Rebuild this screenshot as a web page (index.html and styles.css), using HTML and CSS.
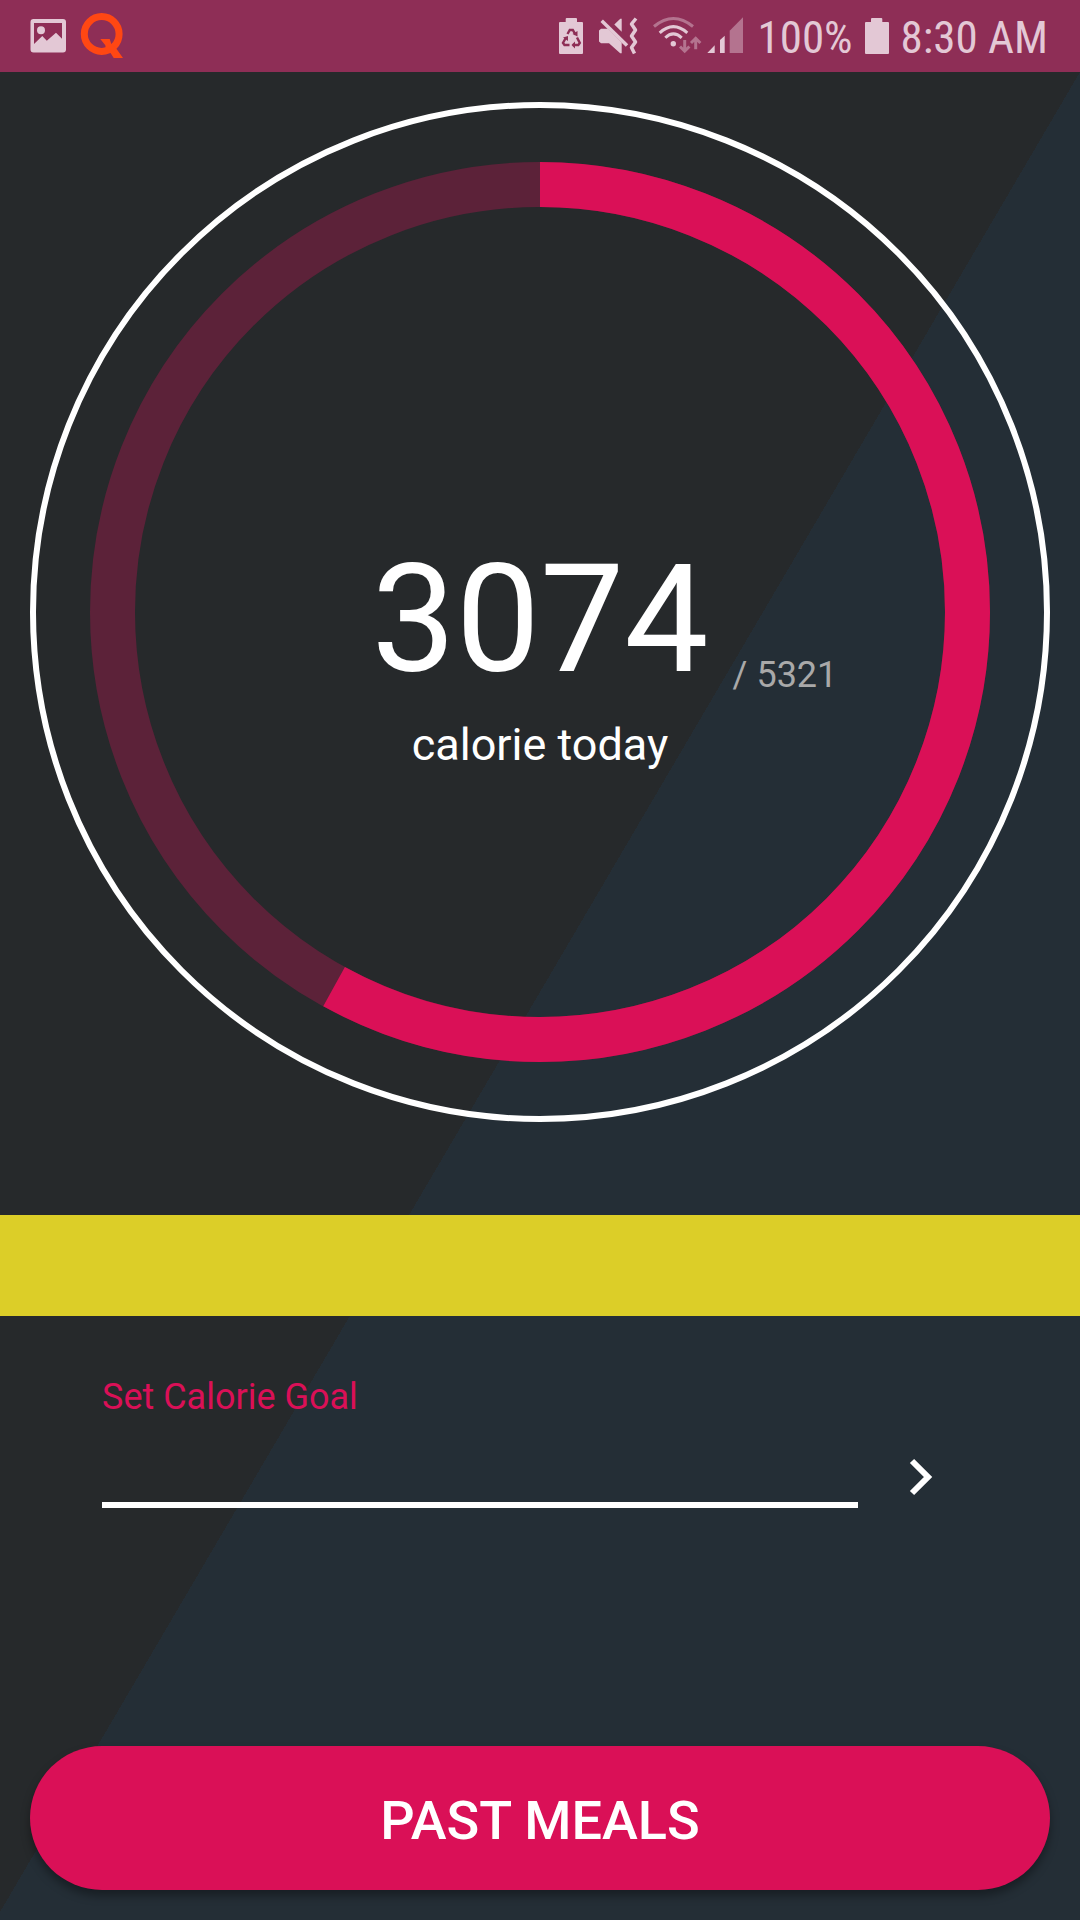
FILE: index.html
```
<!DOCTYPE html>
<html lang="en">
  <head>
    <meta charset="UTF-8" />
    <meta name="viewport" content="width=device-width, initial-scale=1.0" />
    <title>Calorie Counter</title>
    <link rel="stylesheet" href="styles.css">
  </head>
  <body>
    <header class="status-bar">
      <svg width="37" height="48" viewBox="0 0 37 48" fill="currentColor">
        <path fill-rule="evenodd" d="M3.5 7H33a3 3 0 0 1 3 3v27.500a3 3 0 0 1-3 3H3.500a3 3 0 0 1-3-3V10a3 3 0 0 1 3-3zM4 11v21l8.300-8 4.500 4.700 9.200-8 6 6V11z" />
        <circle cx="11" cy="18.3" r="4" />
      </svg>
      <svg class="q-icon" width="44" height="48" viewBox="0 0 44 48">
        <circle cx="21.7" cy="22" r="17.4" fill="none" stroke="currentColor" stroke-width="7" />
        <path fill="currentColor" d="M20.300 27h9.400l1.600 5 4.400 3.700L43 46h-9.300l-3-4.700L26 38l-.7-4.700z" />
      </svg>

      <div class="status-right">
        <svg width="27" height="48" viewBox="0 0 27 48">
          <path fill="currentColor" d="M9 6h9a1 1 0 0 1 1 1v3h5a1 1 0 0 1 1 1v30a1 1 0 0 1-1 1H2a1 1 0 0 1-1-1V11a1 1 0 0 1 1-1h5.700V7a1 1 0 0 1 1-1z" />
          <g class="recycle" fill="none" stroke-width="2.400">
            <path d="M9.500 22l2.300-4h3l2.700 4.700" />
            <path d="M8 25.500l-3 5.500 1.500 2h5" />
            <path d="M19 25.500l2.800 5.500-1.500 2h-5.500" />
          </g>
          <g class="recycle-heads">
            <path d="M19.500 19v5.500l-5-2.500z" />
            <path d="M5 25.500l5-1.500v5z" />
            <path d="M17 29.500v7L13.500 33z" />
          </g>
        </svg>
        <svg width="43" height="48" viewBox="0 0 43 48">
          <path fill="currentColor" d="M17.300 12.500l6-5.800h1.400v13zM2 18.500l2-1.800h7l13.700 13.800v10.800h-1.500L12 31.300H4l-2-1.800z" />
          <path fill="none" stroke="currentColor" stroke-width="3.500" d="M4.700 8.700L30 33.500" />
          <path fill="none" stroke="currentColor" stroke-width="3.500" stroke-linejoin="round" d="M39 6.500L34.500 12l4 6-4 6 4 6-4 5.500 3 6" />
        </svg>
        <svg width="93" height="48" viewBox="0 0 93 48">
          <g fill="none" stroke="currentColor" stroke-width="3">
            <path class="dim" d="M2 14.500Q21.300-1.500 41 14.500" />
            <path d="M7.700 20.800Q21.300 8.500 35.300 20.800" />
            <path d="M13.300 25.800Q21.300 18 29.700 25.800" />
            <path class="dim" d="M32.700 28v11M28 34.500l4.700 4.700 4.700-4.700M43.700 37.300v-11M39 31l4.700-4.700L48.400 31" />
          </g>
          <circle cx="21.3" cy="31.700" r="2.700" fill="currentColor" />
          <path fill="currentColor" d="M55.300 41l7.400-7.700V41zM68 41V28l4.700-4.300V41z" />
          <path class="dim" fill="currentColor" d="M77.700 41V18.700L91 5.300V41z" />
        </svg>
        <span>100%</span>
        <svg width="24" height="48" viewBox="0 0 24 48">
          <path fill="currentColor" d="M7 6h9.300a1 1 0 0 1 1 1v3H23a1 1 0 0 1 1 1v30a1 1 0 0 1-1 1H1a1 1 0 0 1-1-1V11a1 1 0 0 1 1-1h5V7a1 1 0 0 1 1-1z" />
        </svg>
        <span>8:30 AM</span>
      </div>
    </header>

    <main>
      <section class="gauge">
        <svg class="gauge-ring" viewBox="0 0 1020 1020" fill="none">
          <circle class="outline" cx="510" cy="510" r="507" />
          <circle class="track" cx="510" cy="510" r="427.500" />
          <!-- 3074 of 5321, rounded up to 58% -->
          <circle class="progress" cx="510" cy="510" r="427.500" pathLength="100" stroke-dasharray="58 100" transform="rotate(-90 510 510)" />
        </svg>
        <div class="gauge-text">
          <span class="count">3074</span>
          <span class="goal">/ 5321</span>
          <span class="caption">calorie today</span>
        </div>
      </section>

      <div class="banner"></div>

      <form class="goal-form">
        <label for="calorieGoal">Set Calorie Goal</label>
        <div class="goal-row">
          <input type="text" inputmode="numeric" id="calorieGoal" />
          <button type="button" class="next" aria-label="Save goal">
            <svg width="24" height="38" viewBox="0 0 24 38" fill="none" stroke="currentColor" stroke-width="6">
              <path d="M3 3l16 16L3 35" />
            </svg>
          </button>
        </div>
      </form>

      <div class="actions">
        <button type="button" class="past-meals">PAST MEALS</button>
      </div>
    </main>
  </body>
</html>
```
FILE: styles.css
```
* {
  margin: 0;
  padding: 0;
  box-sizing: border-box;
}

body {
  display: flex;
  flex-direction: column;
  min-height: 100vh;
  font-family: Roboto, sans-serif;
  font-size: 36px;
  line-height: 42px;
  color: #fff;
  background-color: #242e36;
}

svg {
  display: block;
  flex-shrink: 0;
}

/* status bar */
.status-bar {
  display: flex;
  align-items: center;
  gap: 13px;
  height: 72px;
  padding: 0 32px 0 30px;
  color: #e3c8d5;
  background-color: #8e2e56;
}

.q-icon {
  color: #ff4713;
}

.status-right {
  display: flex;
  align-items: center;
  gap: 12px;
  margin-left: auto;
  font-family: "Roboto Condensed", "Liberation Sans Narrow", Roboto, sans-serif;
  font-size: 45px;
  white-space: nowrap;
}

.status-right span {
  padding-top: 3px;
}

.dim {
  opacity: 0.45;
}

.recycle {
  stroke: #8e2e56;
}

.recycle-heads {
  fill: #8e2e56;
}

/* page */
main {
  display: flex;
  flex-direction: column;
  flex: 1;
  background: linear-gradient(to bottom right, #26292b 50%, #242e36 50%) no-repeat;
  background-size: 100% calc(100% - 8px);
}

.gauge {
  display: grid;
  margin: 30px 30px 93px;
}

.gauge-ring,
.gauge-text {
  grid-area: 1 / 1;
}

.gauge-ring {
  width: 100%;
}

.outline {
  stroke: #fff;
  stroke-width: 6;
}

.track {
  stroke: #5c2239;
  stroke-width: 45;
}

.progress {
  stroke: #da1057;
  stroke-width: 45;
}

.gauge-text {
  display: grid;
  grid-template-columns: 1fr auto 1fr;
  align-self: center;
  align-items: end;
  row-gap: 10px;
  padding-top: 78px;
}

.count {
  grid-column: 2;
  font-size: 150px;
  line-height: 176px;
}

.goal {
  padding: 0 0 12px 24px;
  color: #a9a9a9;
}

.caption {
  grid-column: 1 / -1;
  font-size: 45px;
  line-height: 53px;
  text-align: center;
}

.banner {
  height: 101px;
  background-color: #dcce28;
}

.goal-form {
  padding: 60px 96px 60px 102px;
}

label {
  display: block;
  color: #da1057;
}

.goal-row {
  display: flex;
  align-items: flex-end;
}

input {
  flex: 1;
  min-width: 0;
  height: 90px;
  font: inherit;
  color: #fff;
  background: none;
  border: none;
  border-bottom: 6px solid #fff;
  outline: none;
}

button {
  font: inherit;
  color: #fff;
  border: none;
  cursor: pointer;
}

.next {
  display: flex;
  align-items: center;
  justify-content: center;
  width: 126px;
  height: 62px;
  background: none;
}

.actions {
  margin-top: auto;
  padding: 30px;
}

.past-meals {
  width: 100%;
  height: 144px;
  padding-top: 5px;
  font-size: 54px;
  font-weight: 500;
  background-color: #da1057;
  border-radius: 72px;
  box-shadow: 0 6px 10px rgba(0, 0, 0, 0.35);
}
```
